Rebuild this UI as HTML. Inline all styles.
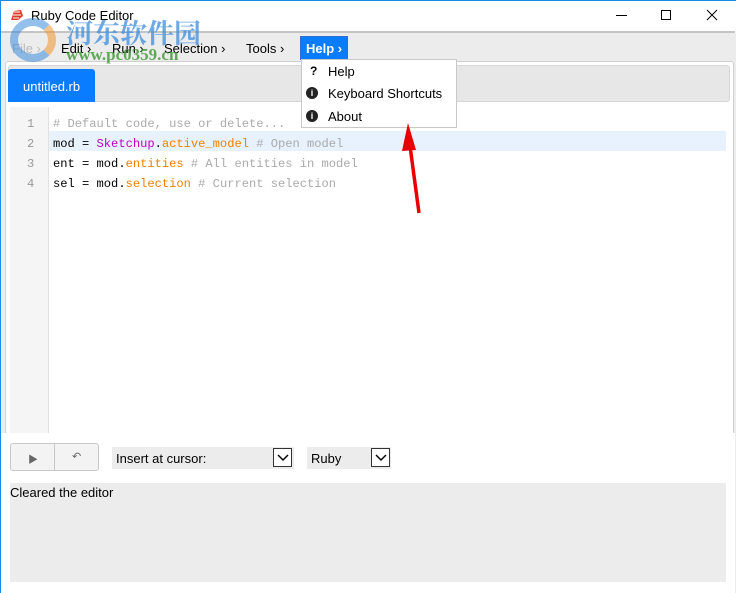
<!DOCTYPE html>
<html><head><meta charset="utf-8"><style>
*{margin:0;padding:0;box-sizing:border-box}
body{width:736px;height:593px;background:#fff;position:relative;overflow:hidden;font-family:"Liberation Sans","Noto Sans CJK SC",sans-serif;font-size:13px;color:#000}
.a{position:absolute}
.mono{font-family:"Liberation Mono",monospace;font-size:12.1px;white-space:pre}
.menu span{position:absolute;top:41px;font-size:13px}
</style></head><body>
<div class="a" style="left:0;top:0;width:1px;height:593px;background:#1a8ce8"></div>
<div class="a" style="left:0;top:0;width:736px;height:1px;background:#1a8ce8"></div>
<!-- title -->
<svg class="a" style="left:9px;top:8px" width="16" height="14"><path d="M2 12 L5 3 L12 2 L14 8 L9 12 Z" fill="#e03a2a"/><path d="M5 4 L11 4 M4 7 L12 7 M4 10 L10 10" stroke="#fff" stroke-width="1"/></svg>
<div class="a" style="left:31px;top:8px;font-size:13px">Ruby Code Editor</div>
<div class="a" style="left:616px;top:15px;width:11px;height:1px;background:#000"></div>
<div class="a" style="left:661px;top:10px;width:10px;height:10px;border:1px solid #000"></div>
<svg class="a" style="left:706px;top:9px" width="12" height="12"><path d="M1 1L11 11M11 1L1 11" stroke="#000" stroke-width="1"/></svg>
<div class="a" style="left:1px;top:31px;width:734px;height:2px;background:#c4c4c4"></div>
<div class="a" style="left:1px;top:33px;width:735px;height:560px;background:#ececec"></div>
<div class="menu">
<span style="left:12px;color:#bbb">File ›</span>
<span style="left:61px">Edit ›</span>
<span style="left:112px">Run ›</span>
<span style="left:164px">Selection ›</span>
<span style="left:246px">Tools ›</span>
</div>
<div class="a" style="left:300px;top:36px;width:48px;height:24px;background:#0a7cff;border:1px solid #2d6fd0"></div>
<div class="a" style="left:306px;top:41px;color:#fff;font-weight:bold">Help ›</div>
<!-- panel -->
<div class="a" style="left:5px;top:61px;width:729px;height:532px;background:#fff;border:1px solid #d0d0d0;border-radius:3px"></div>
<div class="a" style="left:8px;top:65px;width:722px;height:37px;background:#e7e7e7;border:1px solid #d6d6d6;border-radius:3px"></div>
<div class="a" style="left:8px;top:69px;width:87px;height:33px;background:#0a7cff;border-radius:3px 3px 0 0"></div>
<div class="a" style="left:23px;top:79px;color:#fff;font-size:13px">untitled.rb</div>
<!-- editor -->
<div class="a" style="left:10px;top:107px;width:39px;height:326px;background:#f5f5f5;border-right:1px solid #e2e2e2"></div>
<div class="a" style="left:49px;top:131px;width:677px;height:20px;background:#e8f2fe"></div>
<div class="a mono" style="left:27px;top:114px;color:#999;line-height:20px">1
2
3
4</div>
<div class="a mono" style="left:53px;top:114px;line-height:20px"><span style="color:#aaa"># Default code, use or delete...</span>
mod = <span style="color:#c000c0">Sketchup</span>.<span style="color:#f08000">active_model</span> <span style="color:#aaa"># Open model</span>
ent = mod.<span style="color:#f08000">entities</span> <span style="color:#aaa"># All entities in model</span>
sel = mod.<span style="color:#f08000">selection</span> <span style="color:#aaa"># Current selection</span></div>
<!-- dropdown -->
<div class="a" style="left:301px;top:59px;width:156px;height:69px;background:#fff;border:1px solid #c8c8c8"></div>
<div class="a" style="left:310px;top:64px;font-weight:bold;font-size:12px">?</div>
<div class="a" style="left:328px;top:64px">Help</div>
<div class="a" style="left:306px;top:87px;width:12px;height:12px;border-radius:50%;background:#222;color:#fff;font-size:9px;font-weight:bold;text-align:center;line-height:12px">i</div>
<div class="a" style="left:328px;top:86px">Keyboard Shortcuts</div>
<div class="a" style="left:306px;top:110px;width:12px;height:12px;border-radius:50%;background:#222;color:#fff;font-size:9px;font-weight:bold;text-align:center;line-height:12px">i</div>
<div class="a" style="left:328px;top:109px">About</div>
<!-- arrow -->
<svg class="a" style="left:395px;top:118px" width="40" height="100"><path d="M24 95 L15 28" stroke="#e80000" stroke-width="3.5"/><path d="M13 5 L21 32 L7 33 Z" fill="#e80000"/></svg>
<!-- bottom -->
<div class="a" style="left:1px;top:433px;width:734px;height:160px;background:#fff"></div>
<div class="a" style="left:10px;top:443px;width:89px;height:28px;border:1px solid #c8c8c8;border-radius:3px;background:#f3f3f3"></div>
<div class="a" style="left:54px;top:443px;width:1px;height:28px;background:#c8c8c8"></div>
<div class="a" style="left:28px;top:451px;font-size:10px;color:#666">▶</div>
<div class="a" style="left:72px;top:450px;font-size:11px;color:#666">↶</div>
<div class="a" style="left:112px;top:447px;width:182px;height:22px;background:#ececec"></div>
<div class="a" style="left:116px;top:451px">Insert at cursor:</div>
<div class="a" style="left:273px;top:448px;width:19px;height:19px;border:1px solid #333;background:#fff"></div>
<svg class="a" style="left:276px;top:452px" width="14" height="10"><path d="M2 3L7 8L12 3" stroke="#000" stroke-width="1.5" fill="none"/></svg>
<div class="a" style="left:307px;top:447px;width:84px;height:22px;background:#ececec"></div>
<div class="a" style="left:311px;top:451px">Ruby</div>
<div class="a" style="left:371px;top:448px;width:19px;height:19px;border:1px solid #333;background:#fff"></div>
<svg class="a" style="left:374px;top:452px" width="14" height="10"><path d="M2 3L7 8L12 3" stroke="#000" stroke-width="1.5" fill="none"/></svg>
<div class="a" style="left:10px;top:483px;width:716px;height:99px;background:#ececec"></div>
<div class="a" style="left:10px;top:485px">Cleared the editor</div>
<!-- watermark -->
<div class="a" style="left:66px;top:12px;font-size:27px;font-weight:bold;color:rgba(60,140,220,.75);font-family:'Noto Serif CJK SC',serif">河东软件园</div>
<div class="a" style="left:66px;top:45px;font-size:17px;font-weight:bold;color:rgba(60,150,50,.8);font-family:'Liberation Serif',serif">www.pc0359.cn</div>
<div class="a" style="left:10px;top:18px;width:46px;height:44px;border-radius:50%;border:8px solid rgba(60,140,220,.55);border-right-color:rgba(240,150,40,.55)"></div>
</body></html>
